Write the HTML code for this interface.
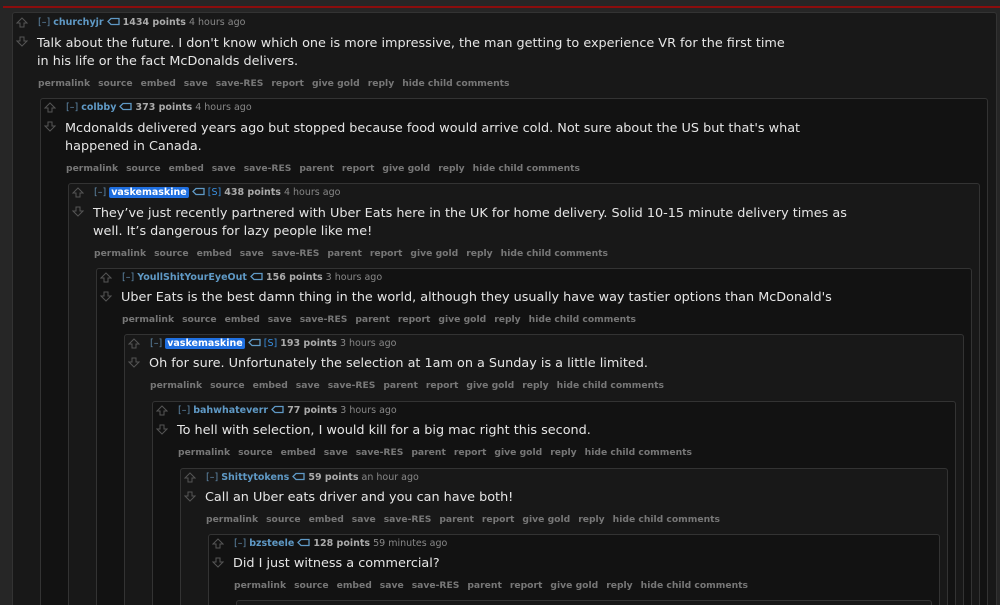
<!DOCTYPE html>
<html style="overflow:hidden;width:1000px;height:605px"><head><meta charset="utf-8"><style>
body{margin:0;width:1000px;height:605px;overflow:hidden;background:#262626;font-family:"DejaVu Sans","Liberation Sans",sans-serif;position:relative}
.red{position:absolute;left:3px;top:6px;width:997px;height:2px;background:#8a0d0d}
.box{position:absolute;border:1px solid #333;border-radius:3px;bottom:-10px}
.o{background:#181818}.e{background:#121212}
.c{position:absolute;white-space:nowrap}
.h{font-size:9.5px;color:#888}
.h .br{color:#5f88a8}
.h .u{color:#5f99c5;font-weight:bold}
.h .hl{background:#1f6fe0;color:#fff;font-weight:bold;padding:0 2px;border-radius:2px}
.h .s{color:#3a8fe0}
.h .p{color:#aaa;font-weight:bold}
.b{font-size:12.8px;color:#e6e6e6;line-height:18px}
.a{font-size:9.2px;color:#777;font-weight:bold;margin-top:2px}
.a span{margin-right:8px}
.ar{position:absolute;width:12px;height:30px}
svg.t{vertical-align:-1px}
</style></head><body>
<div class="red"></div>
<div class="box o" style="left:12px;top:12px;width:983px"></div>
<div class="box e" style="left:40px;top:98px;width:946px"></div>
<div class="box o" style="left:68px;top:183px;width:910px"></div>
<div class="box e" style="left:96px;top:268px;width:874px"></div>
<div class="box o" style="left:124px;top:334px;width:838px"></div>
<div class="box e" style="left:152px;top:401px;width:802px"></div>
<div class="box o" style="left:180px;top:468px;width:766px"></div>
<div class="box e" style="left:208px;top:534px;width:730px"></div>
<div class="box o" style="left:236px;top:600px;width:694px"></div>

<svg width="0" height="0" style="position:absolute"><defs>
<g id="arr"><path d="M6 1 L11 6 L8 6 L8 10 L4 10 L4 6 L1 6 Z" fill="none" stroke="#555" stroke-width="1"/><path d="M6 29 L11 24 L8 24 L8 20 L4 20 L4 24 L1 24 Z" fill="none" stroke="#555" stroke-width="1"/></g>
<g id="tag"><path d="M1 4.5 L4 1.5 H12 V7.5 H4 Z" fill="none" stroke="#5f99c5" stroke-width="1.3"/></g>
</defs></svg>

<svg class="ar" style="left:16px;top:17px" viewBox="0 0 12 30"><use href="#arr"/></svg>
<div class="c h" style="left:38px;top:17px"><span class="br">[–]</span> <span class="u">churchyjr</span> <svg class="t" width="13" height="9"><use href="#tag"/></svg> <span class="p">1434 points</span> 4 hours ago</div>
<div class="c b" style="left:37px;top:35px">Talk about the future. I don't know which one is more impressive, the man getting to experience VR for the first time<br>in his life or the fact McDonalds delivers.</div>
<div class="c a" style="left:38px;top:76px"><span>permalink</span><span>source</span><span>embed</span><span>save</span><span>save-RES</span><span>report</span><span>give gold</span><span>reply</span><span>hide child comments</span></div>

<svg class="ar" style="left:44px;top:102px" viewBox="0 0 12 30"><use href="#arr"/></svg>
<div class="c h" style="left:66px;top:102px"><span class="br">[–]</span> <span class="u">colbby</span> <svg class="t" width="13" height="9"><use href="#tag"/></svg> <span class="p">373 points</span> 4 hours ago</div>
<div class="c b" style="left:65px;top:120px">Mcdonalds delivered years ago but stopped because food would arrive cold. Not sure about the US but that's what<br>happened in Canada.</div>
<div class="c a" style="left:66px;top:161px"><span>permalink</span><span>source</span><span>embed</span><span>save</span><span>save-RES</span><span>parent</span><span>report</span><span>give gold</span><span>reply</span><span>hide child comments</span></div>

<svg class="ar" style="left:72px;top:187px" viewBox="0 0 12 30"><use href="#arr"/></svg>
<div class="c h" style="left:94px;top:187px"><span class="br">[–]</span> <span class="hl">vaskemaskine</span> <svg class="t" width="13" height="9"><use href="#tag"/></svg> <span class="s">[S]</span> <span class="p">438 points</span> 4 hours ago</div>
<div class="c b" style="left:93px;top:205px">They’ve just recently partnered with Uber Eats here in the UK for home delivery. Solid 10-15 minute delivery times as<br>well. It’s dangerous for lazy people like me!</div>
<div class="c a" style="left:94px;top:246px"><span>permalink</span><span>source</span><span>embed</span><span>save</span><span>save-RES</span><span>parent</span><span>report</span><span>give gold</span><span>reply</span><span>hide child comments</span></div>

<svg class="ar" style="left:100px;top:272px" viewBox="0 0 12 30"><use href="#arr"/></svg>
<div class="c h" style="left:122px;top:272px"><span class="br">[–]</span> <span class="u">YoullShitYourEyeOut</span> <svg class="t" width="13" height="9"><use href="#tag"/></svg> <span class="p">156 points</span> 3 hours ago</div>
<div class="c b" style="left:121px;top:289px">Uber Eats is the best damn thing in the world, although they usually have way tastier options than McDonald's</div>
<div class="c a" style="left:122px;top:312px"><span>permalink</span><span>source</span><span>embed</span><span>save</span><span>save-RES</span><span>parent</span><span>report</span><span>give gold</span><span>reply</span><span>hide child comments</span></div>

<svg class="ar" style="left:128px;top:338px" viewBox="0 0 12 30"><use href="#arr"/></svg>
<div class="c h" style="left:150px;top:338px"><span class="br">[–]</span> <span class="hl">vaskemaskine</span> <svg class="t" width="13" height="9"><use href="#tag"/></svg> <span class="s">[S]</span> <span class="p">193 points</span> 3 hours ago</div>
<div class="c b" style="left:149px;top:355px">Oh for sure. Unfortunately the selection at 1am on a Sunday is a little limited.</div>
<div class="c a" style="left:150px;top:378px"><span>permalink</span><span>source</span><span>embed</span><span>save</span><span>save-RES</span><span>parent</span><span>report</span><span>give gold</span><span>reply</span><span>hide child comments</span></div>

<svg class="ar" style="left:156px;top:405px" viewBox="0 0 12 30"><use href="#arr"/></svg>
<div class="c h" style="left:178px;top:405px"><span class="br">[–]</span> <span class="u">bahwhateverr</span> <svg class="t" width="13" height="9"><use href="#tag"/></svg> <span class="p">77 points</span> 3 hours ago</div>
<div class="c b" style="left:177px;top:422px">To hell with selection, I would kill for a big mac right this second.</div>
<div class="c a" style="left:178px;top:445px"><span>permalink</span><span>source</span><span>embed</span><span>save</span><span>save-RES</span><span>parent</span><span>report</span><span>give gold</span><span>reply</span><span>hide child comments</span></div>

<svg class="ar" style="left:184px;top:472px" viewBox="0 0 12 30"><use href="#arr"/></svg>
<div class="c h" style="left:206px;top:472px"><span class="br">[–]</span> <span class="u">Shittytokens</span> <svg class="t" width="13" height="9"><use href="#tag"/></svg> <span class="p">59 points</span> an hour ago</div>
<div class="c b" style="left:205px;top:489px">Call an Uber eats driver and you can have both!</div>
<div class="c a" style="left:206px;top:512px"><span>permalink</span><span>source</span><span>embed</span><span>save</span><span>save-RES</span><span>parent</span><span>report</span><span>give gold</span><span>reply</span><span>hide child comments</span></div>

<svg class="ar" style="left:212px;top:538px" viewBox="0 0 12 30"><use href="#arr"/></svg>
<div class="c h" style="left:234px;top:538px"><span class="br">[–]</span> <span class="u">bzsteele</span> <svg class="t" width="13" height="9"><use href="#tag"/></svg> <span class="p">128 points</span> 59 minutes ago</div>
<div class="c b" style="left:233px;top:555px">Did I just witness a commercial?</div>
<div class="c a" style="left:234px;top:578px"><span>permalink</span><span>source</span><span>embed</span><span>save</span><span>save-RES</span><span>parent</span><span>report</span><span>give gold</span><span>reply</span><span>hide child comments</span></div>
</body></html>
